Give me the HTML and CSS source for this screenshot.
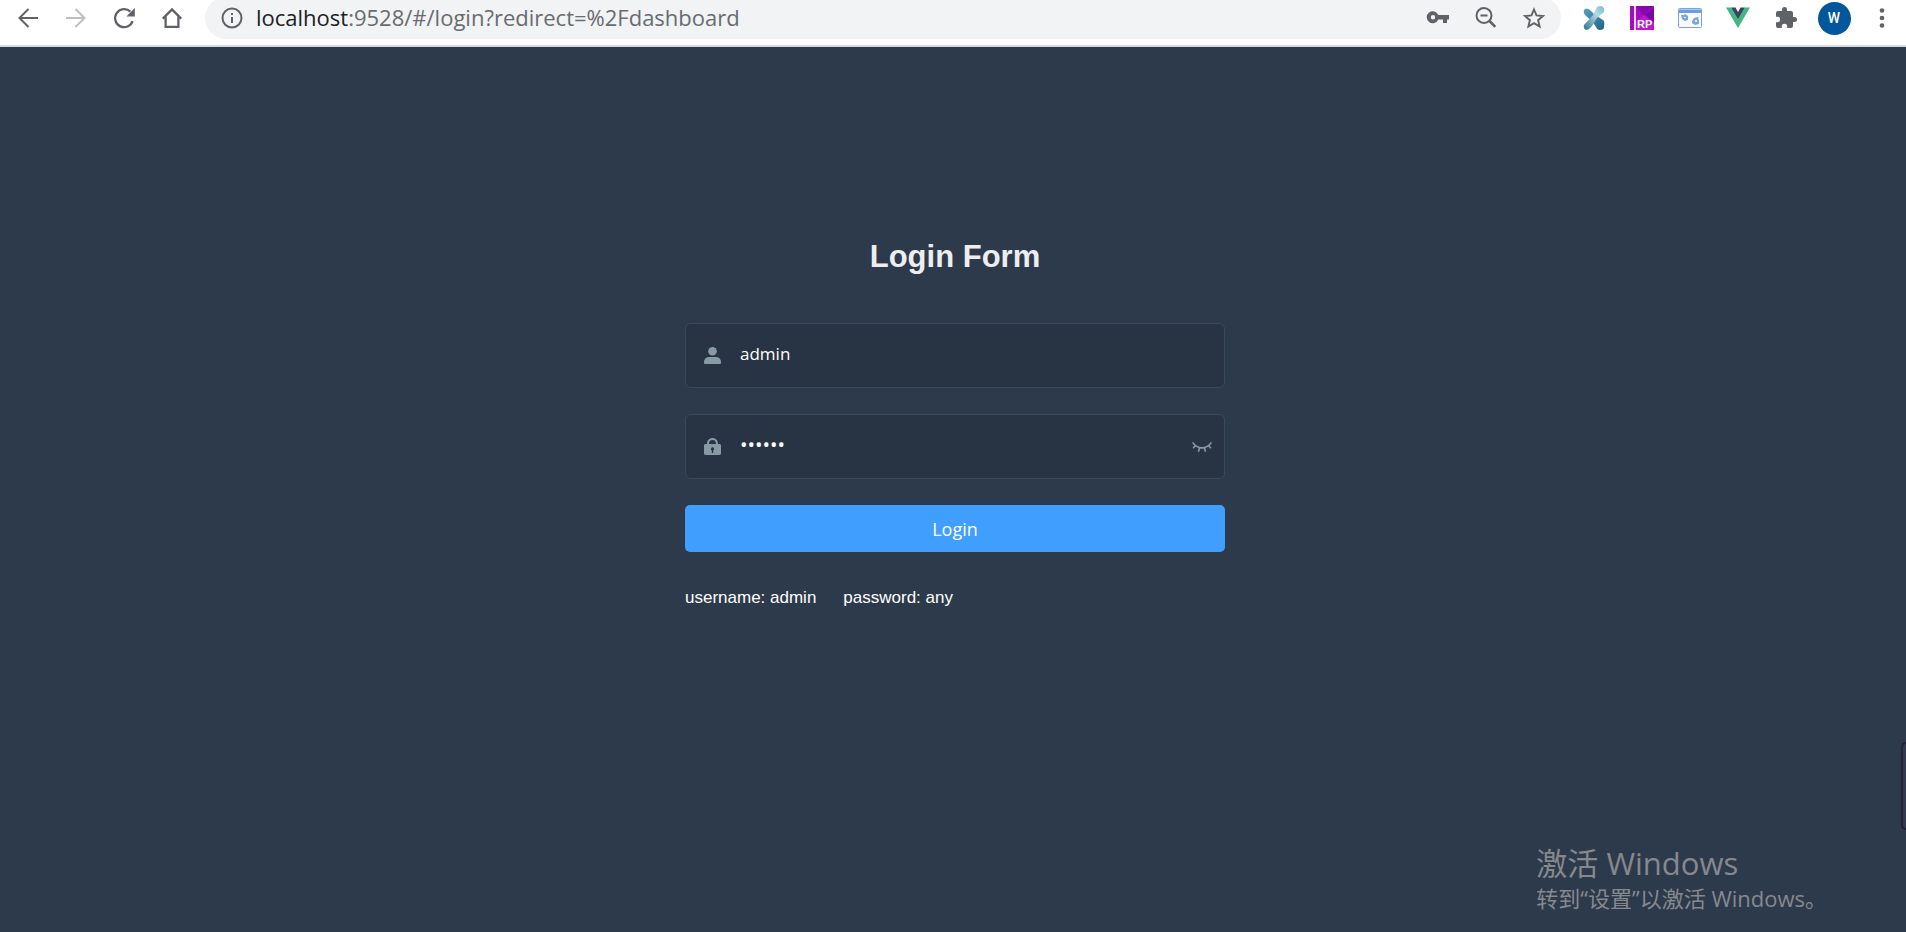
FILE: index.html
```html
<!DOCTYPE html>
<html lang="en">
<head>
    <meta charset="UTF-8">
    <meta name="viewport" content="width=device-width, initial-scale=1.0">
    <title>Login Form</title>
    <link rel="stylesheet" href="styles.css">
</head>
<body>
    <header class="toolbar">
        <button type="button" class="tool" aria-label="Back">
            <svg width="24" height="24" viewBox="0 0 24 24" fill="none" stroke="#5f6368" stroke-width="2"><path d="M22 12H4M12.500 3L3.500 12l9 9"/></svg>
        </button>
        <button type="button" class="tool" aria-label="Forward">
            <svg width="24" height="24" viewBox="0 0 24 24" fill="none" stroke="#bdbfc1" stroke-width="2"><path d="M2 12h18M11.500 3l9 9-9 9"/></svg>
        </button>
        <button type="button" class="tool" aria-label="Reload">
            <svg width="24" height="24" viewBox="0 0 24 24"><path d="M20.600 15.200A9 9 0 1 1 18.400 5.700" fill="none" stroke="#5f6368" stroke-width="2.300"/><path d="M22.800 2v8.400h-8.400z" fill="#5f6368"/></svg>
        </button>
        <button type="button" class="tool" aria-label="Home">
            <svg width="24" height="24" viewBox="0 0 24 24" fill="none" stroke="#5f6368" stroke-width="2.300"><path d="M2.800 12.600L12 3.400l9.200 9.200M5.600 10.500v10.400h12.800V10.500"/></svg>
        </button>

        <div class="address">
            <svg class="info" width="22" height="22" viewBox="0 0 22 22"><circle cx="11" cy="11" r="9.500" fill="none" stroke="#5f6368" stroke-width="2"/><path d="M10 10h2v6h-2zM10 6h2v2h-2z" fill="#5f6368"/></svg>
            <p class="url"><span class="host">localhost</span>:9528/#/login?redirect=%2Fdashboard</p>
            <button type="button" class="tool" aria-label="Passwords">
                <svg width="24" height="24" viewBox="0 0 24 24" fill="#5f6368"><path fill-rule="evenodd" d="M12.300 9A6 6 0 1 0 12.300 13.500H17V17h4v-3.500h2V9zM7 9a2.200 2.200 0 1 1 0 4.400A2.200 2.200 0 0 1 7 9z"/></svg>
            </button>
            <button type="button" class="tool" aria-label="Zoom out">
                <svg width="24" height="24" viewBox="0 0 24 24" fill="none" stroke="#5f6368" stroke-width="2"><circle cx="10" cy="9.500" r="7.500"/><path d="M6.500 9.500h7"/><path d="M15.500 15l5.800 5.800" stroke-width="2.600"/></svg>
            </button>
            <button type="button" class="tool" aria-label="Bookmark">
                <svg width="24" height="24" viewBox="0 0 24 24" fill="none" stroke="#5f6368" stroke-width="1.900"><path d="M12 3.500l2.500 5.900 6.500.6-4.900 4.200 1.500 6.300L12 17.100l-5.600 3.400 1.500-6.300L3 10l6.500-.6z"/></svg>
            </button>
        </div>

        <button type="button" class="tool" aria-label="Extension X">
            <svg width="24" height="24" viewBox="0 0 24 24">
                <defs>
                    <linearGradient id="xLight" x1="1" y1="0" x2="0" y2="1"><stop offset="0" stop-color="#7fb4c9"/><stop offset=".35" stop-color="#b3dae8"/><stop offset="1" stop-color="#2a7391"/></linearGradient>
                    <linearGradient id="xDark" x1="0" y1="0" x2="1" y2="1"><stop offset="0" stop-color="#57a0bd"/><stop offset="1" stop-color="#1f6685"/></linearGradient>
                </defs>
                <path d="M2 4Q4 1 8 4l5 5 8 5q2 1 1 7 0 3-4 3-3 0-4-3l-4-6-6-5Q1 7 2 4z" fill="url(#xDark)"/>
                <path d="M15 1q4-2 6 0 2 2 1 5l-7 6-5 8q-3 4-6 4-3-1-2-5l9-10z" fill="url(#xLight)"/>
            </svg>
        </button>
        <button type="button" class="tool" aria-label="Axure RP">
            <svg width="24" height="24" viewBox="0 0 24 24">
                <path d="M0 0h24v24H0z" fill="#a50cc0"/>
                <path d="M6 0h18L14 10z" fill="#8708ad"/>
                <path d="M24 2v14l-9-7z" fill="#740aa3"/>
                <path d="M6 15l8-6 10 8v7H6z" fill="#bd16cc"/>
                <path d="M4 0h2v24H4z" fill="#f0d5f5"/>
                <text class="rp" x="7" y="22">RP</text>
            </svg>
        </button>
        <button type="button" class="tool" aria-label="Page tools">
            <svg width="24" height="24" viewBox="0 0 24 24">
                <rect x=".5" y="2.500" width="23" height="19" rx="1" fill="#f7faff" stroke="#7ba3dd"/>
                <path d="M1 3h22v4H1z" fill="#6b9ce0"/>
                <path d="M1 3h22v1H1z" fill="#a8c8f5"/>
                <path d="M3 9h3l1-1 3 2v4l-3 1-3-2zM14 15l2-3 4-1 1 4v3l-4 1-3-2z" fill="#7fa5dd"/>
                <path d="M6 11h2v1H6zM17 14h2v2h-2z" fill="#e3edfb"/>
            </svg>
        </button>
        <button type="button" class="tool" aria-label="Vue devtools">
            <svg width="24" height="24" viewBox="0 0 24 24"><path d="M0 1.500h5l7 12 7-12h5L12 22z" fill="#41b883"/><path d="M5 1.500h4.500L12 6l2.500-4.500H19l-7 12z" fill="#35495e"/></svg>
        </button>
        <button type="button" class="tool" aria-label="Extensions">
            <svg width="24" height="24" viewBox="0 0 24 24" fill="#5f6368"><path d="M20.500 11H19V7a2 2 0 0 0-2-2h-4V3.500a2.500 2.500 0 0 0-5 0V5H4a2 2 0 0 0-2 2v3.800h1.500a2.700 2.700 0 0 1 0 5.400H2V20a2 2 0 0 0 2 2h3.800v-1.500a2.700 2.700 0 0 1 5.400 0V22H17a2 2 0 0 0 2-2v-4h1.500a2.500 2.500 0 0 0 0-5z"/></svg>
        </button>
        <button type="button" class="tool" aria-label="Profile W"><span class="avatar">W</span></button>
        <button type="button" class="tool" aria-label="Menu">
            <svg width="24" height="24" viewBox="0 0 24 24" fill="#5f6368"><circle cx="12" cy="4.500" r="2.300"/><circle cx="12" cy="12" r="2.300"/><circle cx="12" cy="19.500" r="2.300"/></svg>
        </button>
    </header>

    <main class="login-container">
        <form id="loginForm" class="login-form">
            <h1 class="title">Login Form</h1>

            <div class="field">
                <label for="username" aria-label="Username">
                    <svg width="17" height="17" viewBox="0 0 17 17" fill="#889aa4"><circle cx="8.500" cy="4.300" r="4.300"/><path d="M5 10h7c3 0 5 2.200 5 5v.8c0 .8-.5 1.200-1.200 1.200H1.200C.5 17 0 16.600 0 15.800V15c0-2.800 2-5 5-5z"/></svg>
                </label>
                <input type="text" id="username" value="admin">
            </div>

            <div class="field">
                <label for="password" aria-label="Password">
                    <svg width="17" height="17" viewBox="0 0 17 17" fill="#889aa4"><path fill-rule="evenodd" d="M3 6C3 2.500 5.200 0 8.500 0S14 2.500 14 6h1.500c1 0 1.500.6 1.500 1.500v7.800c0 1.100-.6 1.700-1.700 1.700H1.700C.6 17 0 16.400 0 15.300V7.500C0 6.600.6 6 1.500 6zM5 6h7c0-2.500-1.200-4-3.500-4S5 3.500 5 6zM8.500 9.300a1.700 1.700 0 0 0-.7 3.200V15h1.400v-2.500a1.700 1.700 0 0 0-.7-3.200z"/></svg>
                </label>
                <input type="password" id="password" value="111111">
                <button type="button" id="showPwd" class="show-pwd" aria-label="Show password">
                    <svg width="20" height="12" viewBox="0 0 20 12" fill="none" stroke="#889aa4" stroke-width="1.600"><path d="M.6 1.300C5 8.700 15 8.700 19.400 1.300M3.500 4.300L1.200 7.200M7.500 6.700l-1 4M12.500 6.700l1 4M16.500 4.300l2.300 2.900"/></svg>
                </button>
            </div>

            <button type="submit" class="login-button">Login</button>

            <p class="tips"><span>username: admin</span><span>password: any</span></p>
        </form>
    </main>

    <div class="side-handle"></div>
    <div class="watermark" lang="zh-CN">
        <p class="watermark-title">激活 Windows</p>
        <p>转到“设置”以激活 Windows。</p>
    </div>

    <script>
        const form = document.getElementById("loginForm");
        const password = document.getElementById("password");
        const showPwd = document.getElementById("showPwd");

        // Afficher ou masquer le mot de passe
        showPwd.addEventListener("click", function () {
            password.type = password.type === "password" ? "text" : "password";
        });

        form.addEventListener("submit", function (event) {
            event.preventDefault();
        });
    </script>
</body>
</html>
```
FILE: styles.css
```css
* {
    box-sizing: border-box;
}

body {
    display: flex;
    flex-direction: column;
    min-height: 100vh;
    margin: 0;
    overflow: hidden;
    background: #2d3a4b;
    font-family: "Liberation Sans", Arial, sans-serif;
}

p, h1 {
    margin: 0;
}

button {
    padding: 0;
    border: none;
    background: none;
    cursor: pointer;
}

svg {
    display: block;
}

/* Browser toolbar */
.toolbar {
    display: flex;
    align-items: center;
    margin-top: -3px;
    padding: 0 0 6px 4px;
    background: white;
    border-bottom: 2px solid #d9dade;
}

.tool {
    display: flex;
    justify-content: center;
    align-items: center;
    flex: none;
    width: 48px;
    height: 42px;
}

.address {
    display: flex;
    align-items: center;
    flex: 1;
    height: 42px;
    margin: 0 9px;
    padding: 0 3px 0 16px;
    background: #f1f3f4;
    border-radius: 21px;
}

.url {
    flex: 1;
    margin-left: 13px;
    padding-bottom: 2px;
    color: #696c70;
    font-family: "Open Sans", "Noto Sans", sans-serif;
    font-size: 22px;
    line-height: 30px;
}

.host {
    color: #202124;
}

.rp {
    fill: white;
    font-family: "Liberation Sans", sans-serif;
    font-size: 11px;
    font-weight: bold;
}

.avatar {
    width: 33px;
    height: 33px;
    border-radius: 50%;
    background: #01579b;
    color: white;
    font-family: Roboto, sans-serif;
    font-size: 14px;
    font-weight: 500;
    line-height: 33px;
}

/* Login form */
.login-container {
    flex: 1;
    padding: 192px 0 0 4px;
}

.login-form {
    display: flex;
    flex-direction: column;
    gap: 26px;
    max-width: 540px;
    margin: 0 auto;
}

.title {
    margin-bottom: 22px;
    color: #eee;
    font-size: 31px;
    line-height: 36px;
    text-align: center;
}

.field {
    display: flex;
    align-items: center;
    height: 65px;
    padding: 0 12px 0 18px;
    border: 1px solid #3e4957;
    border-radius: 6px;
    background: #283443;
}

.field input {
    flex: 1;
    height: 56px;
    margin-left: 19px;
    padding: 0 0 4px;
    border: none;
    outline: none;
    background: none;
    color: white;
    font-family: "Open Sans", "Noto Sans", sans-serif;
    font-size: 17px;
}

.field input[type="password"] {
    font-size: 20px;
}

.login-button {
    height: 47px;
    border-radius: 5px;
    background: #409eff;
    color: white;
    font-family: "Open Sans", "Noto Sans", sans-serif;
    font-size: 18px;
}

.tips {
    display: flex;
    gap: 27px;
    margin-top: 10px;
    color: white;
    font-size: 17px;
    line-height: 20px;
}

/* Desktop overlays */
.side-handle {
    position: absolute;
    top: 742px;
    right: 0;
    width: 5px;
    height: 88px;
    border: 2px solid #1f2436;
    border-right: none;
    border-radius: 5px 0 0 5px;
    background: #343a50;
}

.watermark {
    position: absolute;
    right: 79px;
    bottom: 18px;
    color: #85898e;
    font-family: "Open Sans", "Noto Sans CJK SC", sans-serif;
    font-size: 22px;
    line-height: 32px;
}

.watermark-title {
    font-size: 31px;
    line-height: 38px;
}
```
